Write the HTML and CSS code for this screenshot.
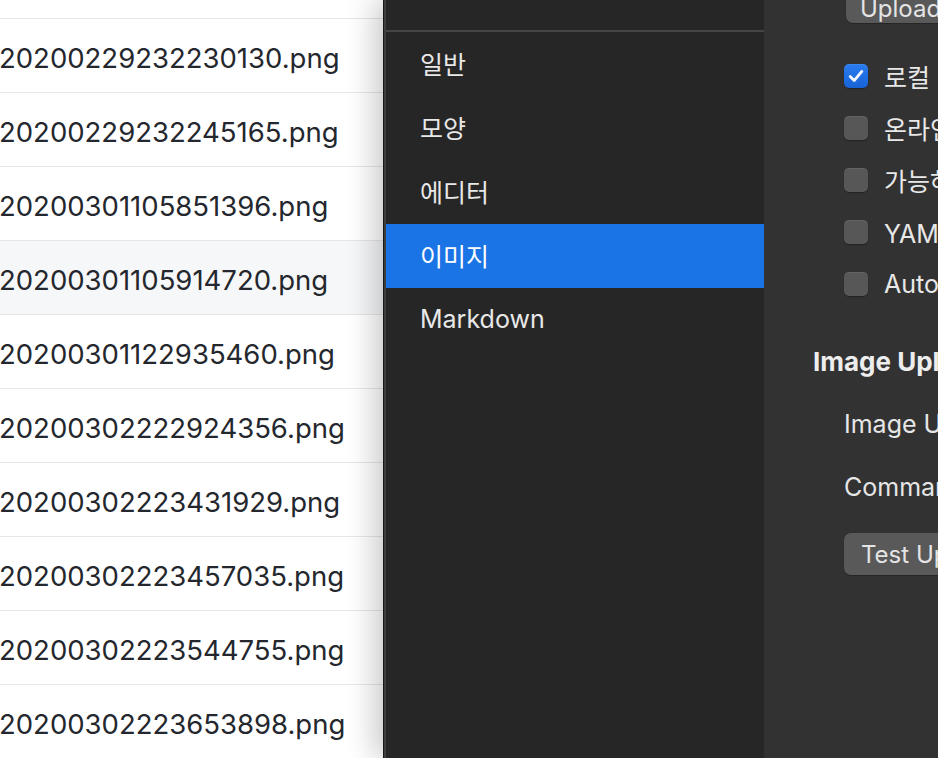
FILE: index.html
```html
<!DOCTYPE html>
<html lang="ko">
<head>
<meta charset="utf-8">
<link rel="stylesheet" href="styles.css">
</head>
<body>
<div class="screen">
  <div class="files">
    <div class="file file-top"></div>
    <div class="file"><span>20200229232230130.png</span></div>
    <div class="file"><span>20200229232245165.png</span></div>
    <div class="file"><span>20200301105851396.png</span></div>
    <div class="file file-hover"><span>20200301105914720.png</span></div>
    <div class="file"><span>20200301122935460.png</span></div>
    <div class="file"><span>20200302222924356.png</span></div>
    <div class="file"><span>20200302223431929.png</span></div>
    <div class="file"><span>20200302223457035.png</span></div>
    <div class="file"><span>20200302223544755.png</span></div>
    <div class="file"><span>20200302223653898.png</span></div>
  </div>
  <div class="prefs">
    <nav class="sidebar">
      <div class="sidebar-top"></div>
      <div class="nav-item">일반</div>
      <div class="nav-item">모양</div>
      <div class="nav-item">에디터</div>
      <div class="nav-item is-active">이미지</div>
      <div class="nav-item">Markdown</div>
    </nav>
    <main class="content">
      <div class="btn btn-upload">Upload Image</div>
      <ul class="checks">
        <li class="check-row"><span class="box is-checked"><svg viewBox="0 0 24 24" width="24" height="24"><path d="M6.2 12.6 L10.2 16.6 L17.8 7.4" fill="none" stroke="#f4f7ff" stroke-width="2.8" stroke-linecap="round" stroke-linejoin="round"/></svg></span><span class="label">로컬 이미지에 위 규칙 적용</span></li>
        <li class="check-row"><span class="box"></span><span class="label">온라인 이미지에 위 규칙 적용</span></li>
        <li class="check-row"><span class="box"></span><span class="label">가능하면 상대 경로 사용</span></li>
        <li class="check-row"><span class="box"></span><span class="label">YAML 머리말에 추가</span></li>
        <li class="check-row"><span class="box"></span><span class="label">Auto escape image URL</span></li>
      </ul>
      <h2 class="section-title">Image Uploader</h2>
      <div class="field">Image Uploader</div>
      <div class="field field-cmd">Command</div>
      <div class="btn btn-test">Test Uploader</div>
    </main>
  </div>
</div>
</body>
</html>
```

FILE: styles.css
```css
* { box-sizing: border-box; }
html, body { margin: 0; padding: 0; }
body {
  width: 938px;
  height: 758px;
  overflow: hidden;
  font-family: Inter, "Noto Sans CJK KR", "Noto Sans", sans-serif;
  background: #ffffff;
}
.screen {
  display: flex;
  width: 938px;
  height: 758px;
  overflow: hidden;
}
.files {
  width: 383px;
  flex: none;
  background: #ffffff;
  overflow: hidden;
}
.file {
  height: 74px;
  border-bottom: 1px solid #e6e6eb;
  display: flex;
  align-items: center;
  color: #24272d;
  font-size: 27.5px;
  white-space: nowrap;
  padding-top: 4px;
  padding-left: 0;
}
.file span { margin-left: -1px; }
.file-top { height: 19px; }
.file-hover { background: #f6f7f9; }
.prefs {
  flex: 1;
  display: flex;
  min-width: 0;
  position: relative;
  border-left: 1px solid #181818;
  box-shadow: -8px 0 28px rgba(0, 0, 0, 0.22);
  overflow: hidden;
}
.sidebar {
  width: 380px;
  flex: none;
  background: #262626;
  border-left: 2px solid #3e3e3e;
}
.sidebar-top {
  height: 32px;
  border-bottom: 2px solid #454545;
}
.nav-item {
  height: 64px;
  display: flex;
  align-items: center;
  padding-left: 34px;
  padding-bottom: 3px;
  color: #e8e8e8;
  font-size: 25px;
  white-space: nowrap;
}
.nav-item.is-active {
  background: #1b74e5;
  color: #ffffff;
}
.content {
  flex: 1;
  min-width: 0;
  background: #323232;
  padding-left: 49px;
  white-space: nowrap;
  color: #e6e6e6;
  font-size: 25px;
  display: flex;
  flex-direction: column;
  align-items: flex-start;
}
.btn {
  height: 42px;
  border-radius: 7px;
  background: #595959;
  color: #e4e4e4;
  display: flex;
  align-items: center;
  padding: 0 16px;
  font-size: 24px;
  box-shadow: 0 1px 1px rgba(0,0,0,0.25);
}
.btn-upload {
  height: 30px;
  margin-top: -7px;
  margin-left: 33px;
  padding-left: 14px;
  border-radius: 0 0 7px 7px;
}
.checks {
  list-style: none;
  margin: 27px 0 0 31px;
  padding: 0;
}
.check-row {
  height: 52px;
  display: flex;
  align-items: center;
  gap: 16px;
}
.box {
  width: 24px;
  height: 24px;
  border-radius: 5px;
  background: #575757;
  box-shadow: inset 0 1px 0 rgba(255,255,255,0.08), 0 1px 1px rgba(0,0,0,0.3);
  flex: none;
  display: block;
}
.box.is-checked {
  background: linear-gradient(#2a7cf0, #1763d6);
}
.box svg { display: block; }
.label { color: #e8e8e8; }
.section-title {
  margin: 32px 0 0 0;
  height: 40px;
  line-height: 40px;
  font-size: 26px;
  font-weight: 700;
  color: #ededed;
}
.field {
  margin: 22px 0 0 31px;
  height: 40px;
  line-height: 40px;
}
.field-cmd { margin-top: 23px; }
.btn-test {
  margin: 26px 0 0 31px;
  padding-left: 17px;
}
```
